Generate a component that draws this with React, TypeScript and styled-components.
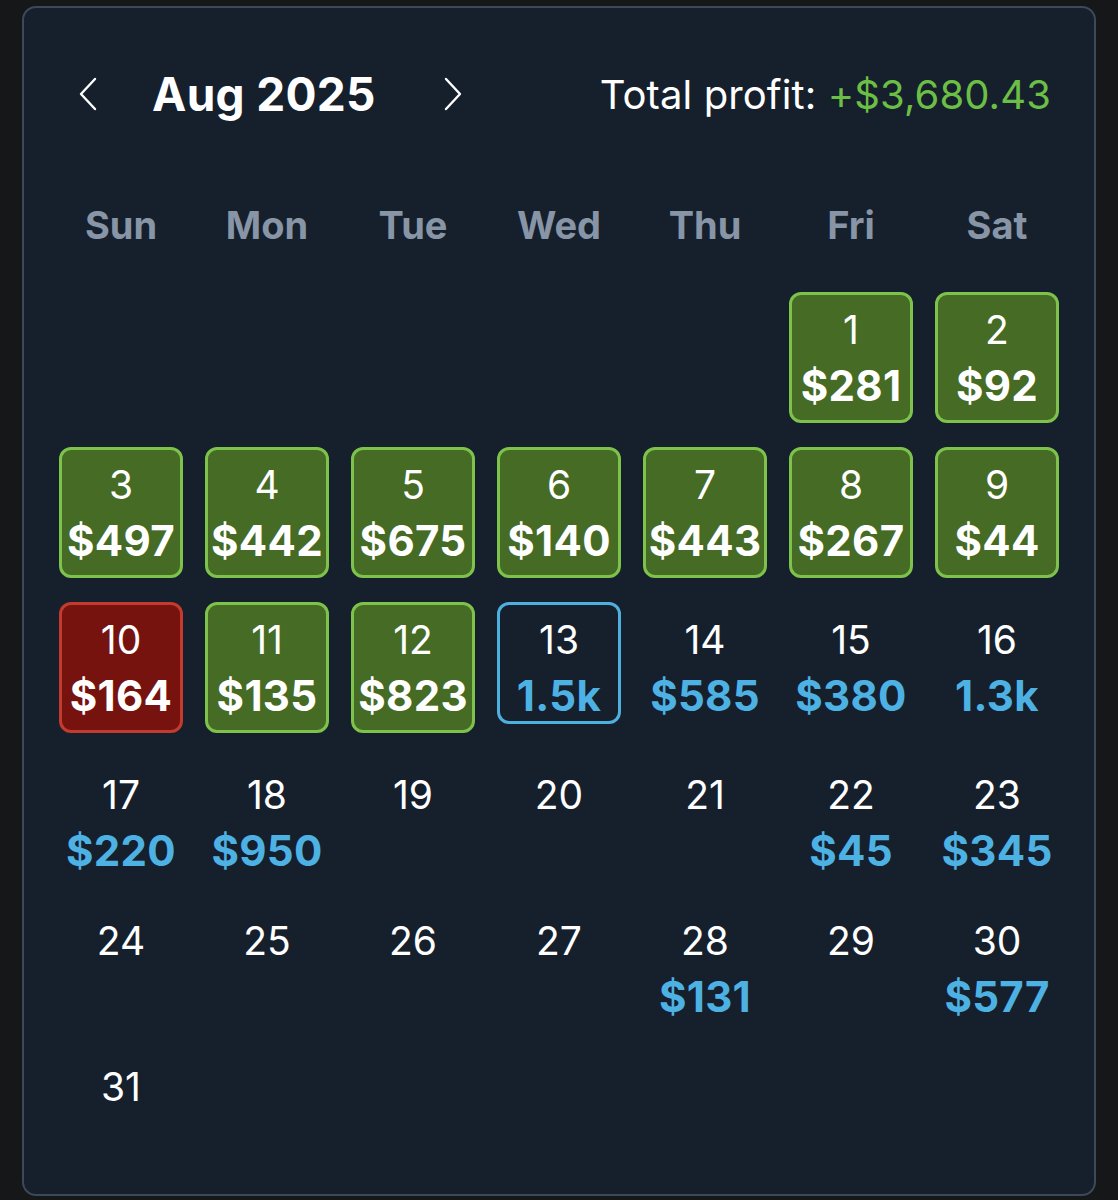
import styled, { createGlobalStyle } from "styled-components";

const GlobalStyle = createGlobalStyle`
    body {
        margin: 0;
        background: #161719;
        font-family: Inter, "Noto Sans", "Liberation Sans", sans-serif;
    }
`;

const Page = styled.div`
    padding: 6px 22px 4px 22px;
    background: #161719;
`;

const Card = styled.div`
    box-sizing: border-box;
    height: 1190px;
    background: #16202d;
    border: 2px solid #3b4959;
    border-radius: 14px;
    padding: 56px 35px 0 35px;
`;

const Header = styled.div`
    height: 60px;
    display: flex;
    align-items: center;
    justify-content: space-between;
    padding: 0 8px 0 17px;
`;

const MonthNav = styled.div`
    display: flex;
    align-items: center;
`;

const NavButton = styled.button`
    background: none;
    border: none;
    padding: 0;
    width: 24px;
    height: 40px;
    display: flex;
    align-items: center;
    justify-content: center;
    cursor: pointer;
`;

const MonthTitle = styled.h2`
    margin: 0 65px 0 52px;
    color: #ffffff;
    font-size: 46px;
    font-weight: 700;
    letter-spacing: 0.3px;
`;

const Total = styled.div`
    color: #ffffff;
    font-size: 40px;
    font-weight: 400;
    letter-spacing: 0.1px;
`;

const Profit = styled.span`
    color: #6cbf45;
`;

const Grid = styled.div`
    display: grid;
    grid-template-columns: repeat(7, 124px);
    column-gap: 22px;
    row-gap: 24px;
`;

const WeekdayRow = styled(Grid)`
    margin-top: 79px;
    margin-bottom: 45px;
`;

const Weekday = styled.div`
    height: 44px;
    line-height: 44px;
    text-align: center;
    color: #8795a6;
    font-size: 38px;
    font-weight: 700;
`;

type Tone = "win" | "loss" | "today" | "plain";

const toneBg: Record<Tone, string> = {
    win: "#466b25",
    loss: "#76130f",
    today: "transparent",
    plain: "transparent",
};

const toneBorder: Record<Tone, string> = {
    win: "#7dc24b",
    loss: "#c43a2e",
    today: "#4eb0de",
    plain: "transparent",
};

const Cell = styled.div<{ $tone: Tone }>`
    box-sizing: border-box;
    height: ${(p) => (p.$tone === "win" || p.$tone === "loss" ? 131 : 122)}px;
    border: 3px solid ${(p) => toneBorder[p.$tone]};
    background: ${(p) => toneBg[p.$tone]};
    border-radius: 12px;
    padding-top: 13px;
    display: flex;
    flex-direction: column;
    align-items: center;
    gap: 10px;
`;

const DayNum = styled.div`
    height: 44px;
    line-height: 44px;
    color: #ffffff;
    font-size: 39px;
    font-weight: 400;
`;

const Amount = styled.div<{ $filled: boolean }>`
    height: 48px;
    line-height: 48px;
    color: ${(p) => (p.$filled ? "#ffffff" : "#4db2e3")};
    font-size: 42px;
    font-weight: 700;
    letter-spacing: 0.3px;
`;

const Chevron = ({ dir }: { dir: "left" | "right" }) => (
    <svg width="20" height="34" viewBox="0 0 20 34" fill="none">
        <path
            d={dir === "left" ? "M17 2 L3 17 L17 32" : "M3 2 L17 17 L3 32"}
            stroke="#ffffff"
            strokeWidth="2.4"
            strokeLinecap="round"
            strokeLinejoin="round"
        />
    </svg>
);

interface Day {
    day: number;
    amount?: string;
    tone: Tone;
}

const days: Day[] = [
    { day: 1, amount: "$281", tone: "win" },
    { day: 2, amount: "$92", tone: "win" },
    { day: 3, amount: "$497", tone: "win" },
    { day: 4, amount: "$442", tone: "win" },
    { day: 5, amount: "$675", tone: "win" },
    { day: 6, amount: "$140", tone: "win" },
    { day: 7, amount: "$443", tone: "win" },
    { day: 8, amount: "$267", tone: "win" },
    { day: 9, amount: "$44", tone: "win" },
    { day: 10, amount: "$164", tone: "loss" },
    { day: 11, amount: "$135", tone: "win" },
    { day: 12, amount: "$823", tone: "win" },
    { day: 13, amount: "1.5k", tone: "today" },
    { day: 14, amount: "$585", tone: "plain" },
    { day: 15, amount: "$380", tone: "plain" },
    { day: 16, amount: "1.3k", tone: "plain" },
    { day: 17, amount: "$220", tone: "plain" },
    { day: 18, amount: "$950", tone: "plain" },
    { day: 19, tone: "plain" },
    { day: 20, tone: "plain" },
    { day: 21, tone: "plain" },
    { day: 22, amount: "$45", tone: "plain" },
    { day: 23, amount: "$345", tone: "plain" },
    { day: 24, tone: "plain" },
    { day: 25, tone: "plain" },
    { day: 26, tone: "plain" },
    { day: 27, tone: "plain" },
    { day: 28, amount: "$131", tone: "plain" },
    { day: 29, tone: "plain" },
    { day: 30, amount: "$577", tone: "plain" },
    { day: 31, tone: "plain" },
];

const weekdays = ["Sun", "Mon", "Tue", "Wed", "Thu", "Fri", "Sat"];
const leadingBlanks = 5;

function App() {
    return (
        <Page>
            <GlobalStyle />
            <Card>
                {/* Month switcher and total */}
                <Header>
                    <MonthNav>
                        <NavButton aria-label="Previous month">
                            <Chevron dir="left" />
                        </NavButton>
                        <MonthTitle>Aug 2025</MonthTitle>
                        <NavButton aria-label="Next month">
                            <Chevron dir="right" />
                        </NavButton>
                    </MonthNav>
                    <Total>
                        Total profit: <Profit>+$3,680.43</Profit>
                    </Total>
                </Header>

                <WeekdayRow>
                    {weekdays.map((w) => (
                        <Weekday key={w}>{w}</Weekday>
                    ))}
                </WeekdayRow>

                {/* Day cells */}
                <Grid>
                    {Array.from({ length: leadingBlanks }).map((_, i) => (
                        <div key={"blank" + i} />
                    ))}
                    {days.map((d) => (
                        <Cell key={d.day} $tone={d.tone}>
                            <DayNum>{d.day}</DayNum>
                            {d.amount && (
                                <Amount $filled={d.tone === "win" || d.tone === "loss"}>
                                    {d.amount}
                                </Amount>
                            )}
                        </Cell>
                    ))}
                </Grid>
            </Card>
        </Page>
    );
}

export default App;
